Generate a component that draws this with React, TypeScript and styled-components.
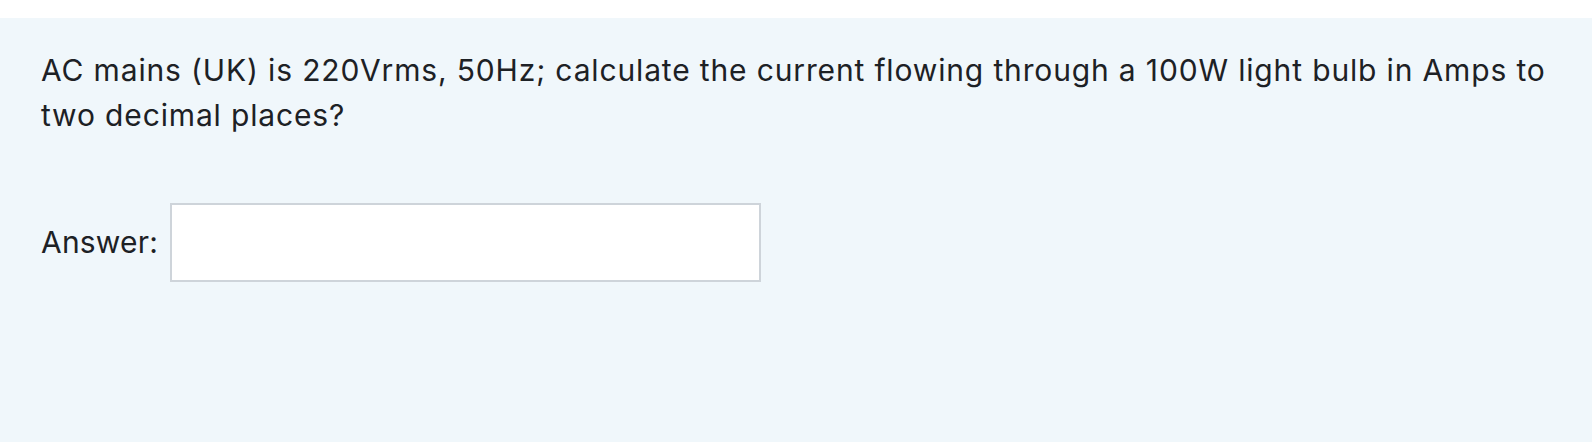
import React from "react";
import styled, { createGlobalStyle } from "styled-components";

const Global = createGlobalStyle`
  html, body { margin: 0; padding: 0; background: #ffffff; }
  body { font-family: Inter, "Noto Sans", sans-serif; color: #1d2125; }
`;

const Page = styled.div`
  padding-top: 18px;
  height: 442px;
  box-sizing: border-box;
`;

const Formulation = styled.div`
  background: #f0f7fb;
  height: 100%;
  box-sizing: border-box;
  padding: 30px 41px 0 41px;
`;

const QText = styled.p`
  margin: 0 0 65px 0;
  font-size: 30px;
  line-height: 45px;
  letter-spacing: 0.85px;
`;

const AnswerRow = styled.div`
  display: flex;
  align-items: center;
  gap: 12px;
`;

const Label = styled.label`
  font-size: 30px;
  line-height: 45px;
  letter-spacing: 0.2px;
`;

const Input = styled.input`
  width: 591px;
  height: 79px;
  box-sizing: border-box;
  border: 2px solid #ced4da;
  background: #ffffff;
  border-radius: 0;
  font-size: 30px;
  padding: 0 16px;
  outline: none;
`;

export default function App() {
  return (
    <>
      <Global />
      <Page>
        <Formulation>
          <QText>
            AC mains (UK) is 220Vrms, 50Hz; calculate the current flowing through a 100W light bulb in Amps to two decimal places?
          </QText>
          <AnswerRow>
            <Label htmlFor="ans">Answer:</Label>
            <Input id="ans" type="text" />
          </AnswerRow>
        </Formulation>
      </Page>
    </>
  );
}
